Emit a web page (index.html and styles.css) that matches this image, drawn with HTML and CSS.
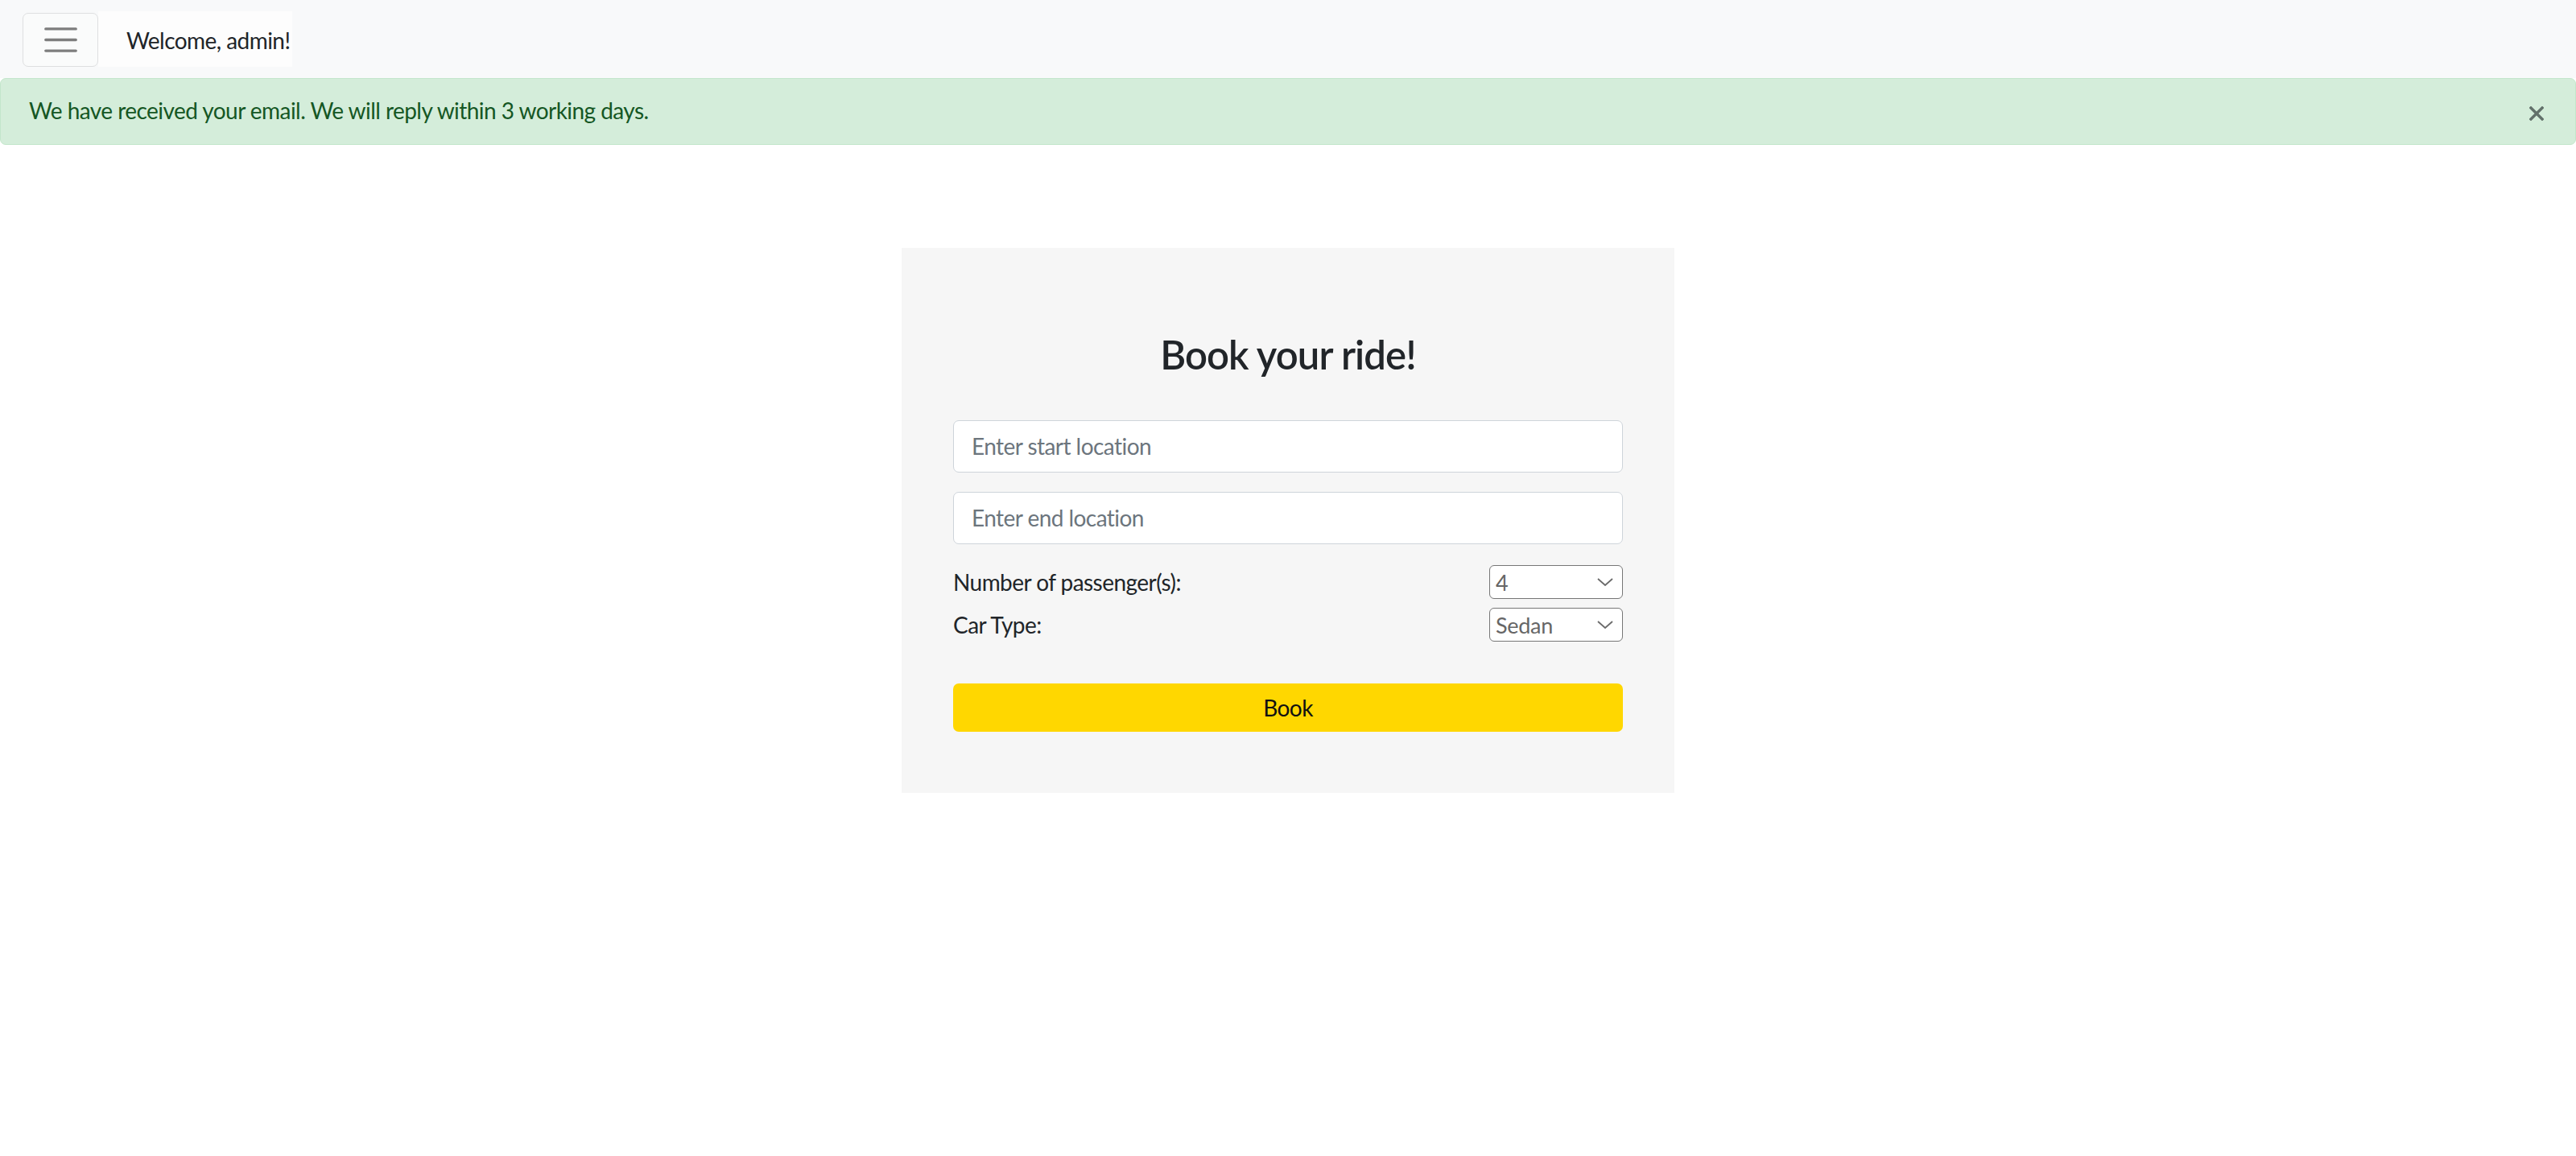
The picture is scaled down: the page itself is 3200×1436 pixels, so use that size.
FILE: index.html
```html
<!DOCTYPE html>
<html lang="en">
<head>
<meta charset="utf-8">
<title>Book your ride</title>
<link rel="stylesheet" href="styles.css">
</head>
<body>
<nav class="navbar">
  <button class="toggler" type="button" aria-label="Toggle navigation">
    <svg class="toggler-icon" viewBox="0 0 30 30" width="51" height="51" aria-hidden="true">
      <path d="M4 7h22M4 15h22M4 23h22" stroke="rgba(0,0,0,0.5)" stroke-width="2" stroke-linecap="round" fill="none"/>
    </svg>
  </button>
  <span class="brand">Welcome, admin!</span>
</nav>

<div class="alert" role="alert">
  <span class="alert-text">We have received your email. We will reply within 3 working days.</span>
  <button class="close" type="button" aria-label="Close">
    <svg viewBox="0 0 18 18" width="18" height="18" aria-hidden="true">
      <path d="M2 2L16 16M16 2L2 16" stroke="#62706a" stroke-width="3.4" stroke-linecap="square" fill="none"/>
    </svg>
  </button>
</div>

<main class="page">
  <form class="card">
    <h3 class="title">Book your ride!</h3>
    <input class="field field-first" type="text" placeholder="Enter start location">
    <input class="field field-second" type="text" placeholder="Enter end location">
    <div class="opt-row opt-row-first">
      <label class="opt-label">Number of passenger(s):</label>
      <div class="select-wrap">
        <select class="select"><option>4</option></select>
        <svg class="chev" viewBox="0 0 20 10" width="20" height="10" aria-hidden="true">
          <path d="M1 1L10 9L19 1" stroke="#6a6a6a" stroke-width="1.8" fill="none"/>
        </svg>
      </div>
    </div>
    <div class="opt-row opt-row-second">
      <label class="opt-label">Car Type:</label>
      <div class="select-wrap">
        <select class="select"><option>Sedan</option></select>
        <svg class="chev" viewBox="0 0 20 10" width="20" height="10" aria-hidden="true">
          <path d="M1 1L10 9L19 1" stroke="#6a6a6a" stroke-width="1.8" fill="none"/>
        </svg>
      </div>
    </div>
    <button class="book" type="button">Book</button>
  </form>
</main>
</body>
</html>
```
FILE: styles.css
```css
* { box-sizing: border-box; }

body {
  margin: 0;
  background: #ffffff;
  font-family: Lato, "Open Sans", sans-serif;
  font-size: 28px;
  line-height: 42px;
  color: #212529;
  letter-spacing: -0.55px;
}

/* navbar */
.navbar {
  height: 97px;
  background: #f8f9fa;
  display: flex;
  align-items: center;
  padding-left: 28px;
}

.toggler {
  width: 94px;
  height: 67px;
  margin-top: 2px;
  border: 1px solid #dedfe0;
  border-radius: 7px;
  background: #fafbfb;
  padding: 0;
  display: flex;
  align-items: center;
  justify-content: center;
}

.toggler-icon { display: block; }

.brand {
  height: 69px;
  padding: 15px 3px 12px 35px;
  background: #fdfdfd;
  white-space: nowrap;
  color: #212529;
}

/* alert */
.alert {
  height: 83px;
  display: flex;
  align-items: center;
  justify-content: space-between;
  padding: 18px 39px 21px 35px;
  background: #d4edda;
  border: 1px solid #c3e6cb;
  border-radius: 7px;
  color: #155724;
}

.alert-text { white-space: nowrap; }

.close {
  width: 18px;
  height: 18px;
  padding: 0;
  margin-top: 7px;
  border: 0;
  background: transparent;
  display: flex;
}

.close svg { display: block; }

/* card */
.page {
  display: flex;
  justify-content: center;
  padding-top: 128px;
}

.card {
  width: 960px;
  background: #f6f6f6;
  padding: 103px 64px 76px;
  display: flex;
  flex-direction: column;
}

.title {
  margin: 0 0 52px;
  font-size: 49px;
  line-height: 58.8px;
  font-weight: 600;
  text-align: center;
  letter-spacing: -0.9px;
  color: #212529;
}

.field {
  height: 65px;
  width: 100%;
  padding: 0 22px;
  border: 1px solid #ced4da;
  border-radius: 7px;
  background: #ffffff;
  font-family: inherit;
  font-size: 28px;
  letter-spacing: -0.55px;
  color: #212529;
}

.field::placeholder { color: #6c757d; opacity: 1; }

.field-first { margin-bottom: 24px; }
.field-second { margin-bottom: 26px; }

.opt-row {
  display: flex;
  align-items: center;
  justify-content: space-between;
  height: 42px;
}

.opt-row-first { margin-bottom: 11px; }
.opt-row-second { margin-bottom: 52px; }

.opt-label {
  font-size: 28px;
  color: #212529;
  white-space: nowrap;
}

.select-wrap {
  position: relative;
  width: 166px;
  height: 42px;
}

.select {
  appearance: none;
  -webkit-appearance: none;
  width: 100%;
  height: 42px;
  padding: 0 0 0 7px;
  border: 1px solid #767676;
  border-radius: 6px;
  background: #ffffff;
  font-family: inherit;
  font-size: 27px;
  letter-spacing: -0.3px;
  color: #666666;
}

.chev {
  position: absolute;
  right: 12px;
  top: 16px;
  pointer-events: none;
}

.book {
  height: 60px;
  width: 100%;
  border: 0;
  border-radius: 7px;
  background: #ffd700;
  font-family: inherit;
  font-size: 28px;
  letter-spacing: -0.55px;
  color: #111111;
  padding: 0;
}
```
